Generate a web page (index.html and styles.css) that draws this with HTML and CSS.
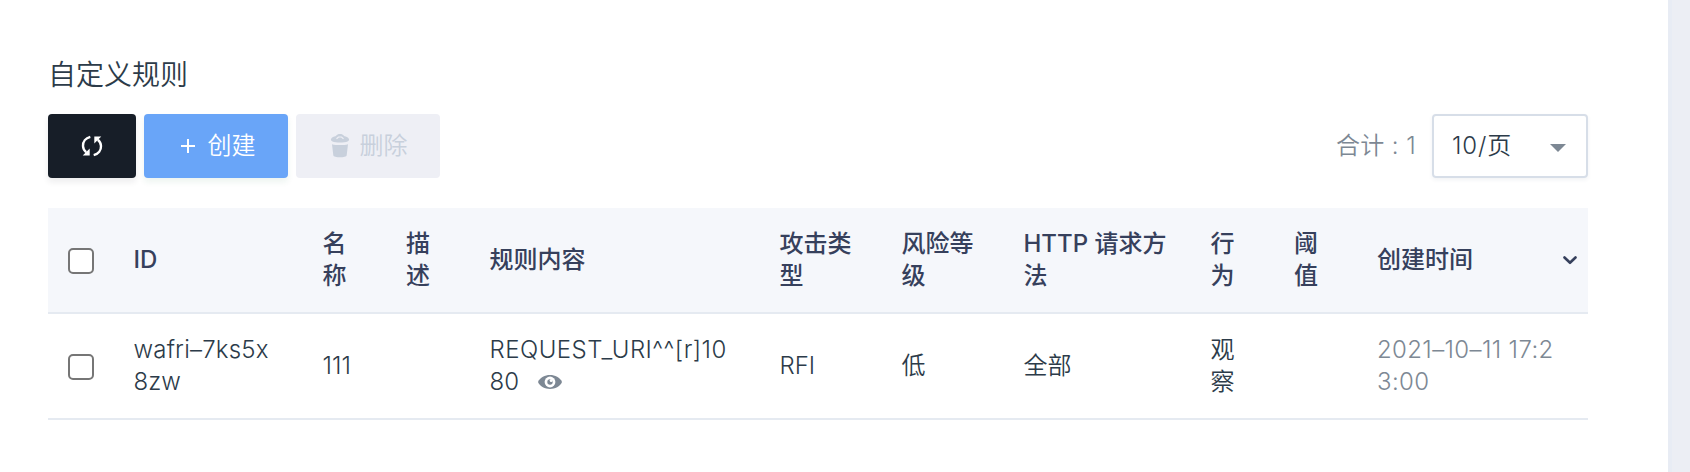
FILE: index.html
```html
<!DOCTYPE html>
<html lang="zh-CN">
<head>
<meta charset="utf-8">
<title>自定义规则</title>
<link rel="stylesheet" href="styles.css">
</head>
<body>
<main class="panel">
  <h1 class="title">自定义规则</h1>
  <div class="toolbar">
    <button class="btn btn-refresh" aria-label="刷新">
      <svg width="22" height="22" viewBox="0 0 22 22" fill="none" stroke="#fff" stroke-width="2.4"><path d="M9.3 1.8C4.6 3 1.8 6.7 2 11c.1 2.600 1.300 4.700 3.200 6.200M12.700 20.200C17.400 19 20.200 15.300 20 11c-.1-2.600-1.300-4.700-3.200-6.200"/><path fill="#fff" stroke="none" d="M1.700 20.500h7V13.500zM20.300 1.500h-7V8.500z"/></svg>
    </button>
    <button class="btn btn-create">
      <svg width="14" height="14" viewBox="0 0 14 14" stroke="#fff" stroke-width="2"><path d="M7 0v14M0 7h14"/></svg>
      <span>创建</span>
    </button>
    <button class="btn btn-delete" disabled>
      <svg width="20" height="24" viewBox="0 0 20 24" fill="#c8d0dc"><path d="M1 5C2 3 4 2.500 5.500 2.200 7 .5 8.200 0 10 0s3 .5 4.500 2.200C16 2.500 18 3 19 5c.4 1.300-.4 2-1.500 2.500-3 1.300-12 1.300-15 0C1.400 7 .6 6.300 1 5zM2 10.200c4 1.200 12 1.200 16 0l-1.300 11C16.500 24 3.500 24 3.300 21.200z"/><path d="m6.500 4.800 2-1.800h3l2 1.800" fill="none" stroke="#eeeff5" stroke-width="1.200"/></svg>
      <span>删除</span>
    </button>
    <span class="total">合计 : 1</span>
    <div class="select"><span class="page-size">10/页</span><i class="caret"></i></div>
  </div>
  <section class="table">
    <div class="row head">
      <div class="cell"><input type="checkbox" class="check"></div>
      <div class="cell">ID</div>
      <div class="cell">名称</div>
      <div class="cell">描述</div>
      <div class="cell">规则内容</div>
      <div class="cell">攻击类型</div>
      <div class="cell">风险等级</div>
      <div class="cell"><div>HTTP 请求方<br>法</div></div>
      <div class="cell">行为</div>
      <div class="cell">阈值</div>
      <div class="cell time-head">创建时间
        <svg width="14" height="9" viewBox="0 0 14 9" fill="none" stroke="#36405c" stroke-width="2.600" stroke-linecap="round" stroke-linejoin="round"><path d="m1.500 1.500 5.500 5.300 5.500-5.300"/></svg>
      </div>
    </div>
    <div class="row">
      <div class="cell"><input type="checkbox" class="check"></div>
      <div class="cell"><div><span class="t-id">wafri–7ks5x</span><br>8zw</div></div>
      <div class="cell">111</div>
      <div class="cell"></div>
      <div class="cell"><div><span class="t-rule">REQUEST_URI^^[r]10</span><br>80<svg class="eye" width="24" height="14" viewBox="0 0 24 14"><path fill="#7d8894" d="M0 7C4-2.300 20-2.300 24 7 20 16.300 4 16.300 0 7z"/><circle cx="12" cy="7" r="5.400" fill="#fff"/><circle cx="12" cy="7" r="2.700" fill="#7d8894"/><circle cx="13.200" cy="5.600" r="1.500" fill="#fff"/></svg></div></div>
      <div class="cell">RFI</div>
      <div class="cell">低</div>
      <div class="cell">全部</div>
      <div class="cell">观察</div>
      <div class="cell"></div>
      <div class="cell time"><div><span class="t-date">2021–10–11 17:2</span><br><span class="t-date">3:00</span></div></div>
    </div>
  </section>
</main>
</body>
</html>
```
FILE: styles.css
```css
* { box-sizing: border-box; }
body {
  margin: 0;
  height: 472px;
  overflow: hidden;
  background: #eceef4;
  color: #2c3b49;
  font: 350 24px/32px Inter, "Noto Sans CJK SC", sans-serif;
}
.panel {
  width: 1668px;
  height: 472px;
  padding: 55px 80px 0 48px;
  background: #fff;
  box-shadow: 4px 0 0 #e8ecf4;
}
.title { margin: 0 0 19px; font-size: 28px; line-height: 40px; font-weight: 350; }
.toolbar { display: flex; align-items: center; gap: 8px; height: 64px; }
.btn {
  display: flex;
  align-items: center;
  justify-content: center;
  width: 144px;
  height: 64px;
  padding: 0;
  border: 0;
  border-radius: 4px;
  font: inherit;
  color: #fff;
}
.btn-refresh { width: 88px; background: #171e28; box-shadow: 0 4px 6px rgba(23, 30, 40, .08); }
.btn-create { gap: 13px; padding-left: 4px; background: #69a5f8; box-shadow: 0 4px 6px rgba(20, 120, 60, .08); }
.btn-delete { gap: 10px; padding-left: 1px; background: #eeeff5; color: #c8d0dc; }
.total { margin-left: auto; margin-right: 8px; color: #7d8894; letter-spacing: .4px; }
.select {
  display: flex;
  align-items: center;
  justify-content: space-between;
  width: 156px;
  height: 64px;
  padding: 0 20px 0 18px;
  border: 2px solid #d7dee8;
  border-radius: 4px;
  box-shadow: 0 2px 4px rgba(30, 50, 90, .06);
}
.page-size { letter-spacing: .9px; }
.caret { border: 8px solid transparent; border-top-color: #7d8894; border-bottom: 0; margin-top: 3px; }
.table { margin-top: 30px; }
.row {
  display: grid;
  grid-template-columns: 66px 189px 83.500px 83.500px 290px 122px 122px 187px 83.500px 83.500px 1fr;
  height: 106px;
  border-bottom: 2px solid #e5eaf1;
}
.head { background: #f5f7fb; color: #36405c; font-weight: 500; }
.cell { display: flex; align-items: center; padding: 0 20px 0 19.500px; word-break: break-all; }
.cell:first-child { padding-left: 20px; }
.cell > div, .cell span { white-space: nowrap; }
.check {
  appearance: none;
  flex: none;
  width: 26px;
  height: 26px;
  margin: 2px 0 0;
  border: 2px solid #767676;
  border-radius: 5px;
  background: #fff;
}
.time-head { justify-content: space-between; padding-left: 19px; padding-right: 11px; }
.time { color: #7d8894; padding-left: 19px; }
.t-id { letter-spacing: .2px; }
.t-rule { letter-spacing: .47px; }
.t-date { letter-spacing: .36px; }
.eye { margin-left: 19px; vertical-align: 1px; }
```
